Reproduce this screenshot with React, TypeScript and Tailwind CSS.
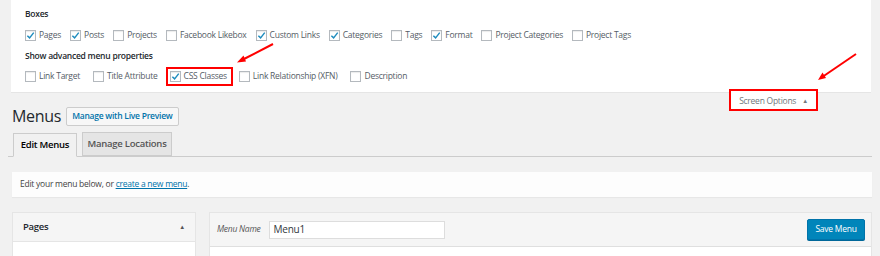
import React from 'react';

type Item = { label: string; checked?: boolean };

const boxes: Item[] = [
  { label: 'Pages', checked: true },
  { label: 'Posts', checked: true },
  { label: 'Projects' },
  { label: 'Facebook Likebox' },
  { label: 'Custom Links', checked: true },
  { label: 'Categories', checked: true },
  { label: 'Tags' },
  { label: 'Format', checked: true },
  { label: 'Project Categories' },
  { label: 'Project Tags' },
];

const Checkbox = ({ checked }: { checked?: boolean }) => (
  <span className="w-[11px] h-[11px] border border-[#b4b9be] bg-white shadow-[inset_0_1px_1px_rgba(0,0,0,0.08)] flex items-center justify-center shrink-0">
    {checked && (
      <svg width="9" height="9" viewBox="0 0 10 10">
        <path d="M1.5 5.2 L4 7.6 L8.6 1.8" fill="none" stroke="#1e8cbe" strokeWidth="1.6" />
      </svg>
    )}
  </span>
);

const Option = ({ label, checked }: Item) => (
  <label className="flex items-center gap-[3px] text-[#555d66]">
    <Checkbox checked={checked} />
    <span>{label}</span>
  </label>
);

export default function App() {
  return (
    <div className="relative w-[880px] h-[256px] overflow-hidden bg-[#f1f1f1] text-[8.5px] tracking-[-0.25px] text-[#444] font-['Open_Sans',sans-serif]">
      {/* Screen options panel */}
      <div className="ml-[11px] mr-[9px] h-[93px] bg-white border-b border-[#e5e5e5] pl-[14px] pt-[8px]">
        <div className="font-semibold text-[#23282d] leading-[12px]">Boxes</div>
        <div className="flex items-center gap-[9px] mt-[9px] h-[12px]">
          {boxes.map(b => (
            <Option key={b.label} {...b} />
          ))}
        </div>
        <div className="font-semibold text-[#23282d] leading-[12px] mt-[9px]">Show advanced menu properties</div>
        <div className="flex items-center gap-[13px] mt-[8px] h-[12px]">
          <Option label="Link Target" />
          <Option label="Title Attribute" />
          <div className="-ml-[5px] -mr-[7px] pl-[2px] pr-[4px] h-[19px] flex items-center border-2 border-[#ff0000]">
            <Option label="CSS Classes" checked />
          </div>
          <Option label="Link Relationship (XFN)" />
          <Option label="Description" />
        </div>
      </div>

      {/* Heading row + screen options tab */}
      <div className="flex items-start justify-between pl-[12px] pr-[62px]">
        <div className="flex items-center gap-[5px] pt-[14px]">
          <h1 className="text-[16px] leading-[19px] tracking-[-0.3px] text-[#23282d]">Menus</h1>
          <button className="h-[19px] px-[5px] bg-[#f7f7f7] border border-[#ccc] rounded-[2px] text-[#0073aa] font-semibold text-[8.5px]">
            Manage with Live Preview
          </button>
        </div>
        <div className="-mt-[4px] w-[89px] h-[22px] border-2 border-[#ff0000] flex items-center justify-center gap-[6px] pt-[3px] bg-white text-[#72777c]">
          <span>Screen Options</span>
          <span className="text-[6px]">▲</span>
        </div>
      </div>

      {/* Tabs */}
      <div className="mx-[8px] mt-[6px] pl-[5px] flex items-end gap-[5px] border-b border-[#ccc] h-[25px]">
        <div className="h-[24px] -mb-px w-[64px] flex items-center justify-center border border-[#ccc] border-b-[#f1f1f1] bg-[#f1f1f1] text-[#000] font-semibold text-[9.5px]">
          Edit Menus
        </div>
        <div className="h-[24px] w-[90px] flex items-center justify-center border border-[#ccc] bg-[#e5e5e5] text-[#555] font-semibold text-[9.5px]">
          Manage Locations
        </div>
      </div>

      {/* Notice */}
      <div className="ml-[12px] mr-[8px] mt-[15px] h-[25px] bg-[#fdfdfd] shadow-[0_1px_1px_rgba(0,0,0,0.04)] flex items-center pl-[8px] text-[#444]">
        Edit your menu below, or&nbsp;
        <span className="text-[#0073aa] underline">create a new menu</span>.
      </div>

      {/* Columns */}
      <div className="flex gap-[13px] ml-[12px] mr-[8px] mt-[15px]">
        <div className="w-[184px] shrink-0 border border-[#e5e5e5] bg-white">
          <div className="h-[29px] flex items-center justify-between px-[10px] bg-[#f5f5f5] border-b border-[#e5e5e5]">
            <span className="font-semibold text-[#23282d] text-[9.5px]">Pages</span>
            <span className="text-[6px] text-[#555]">▲</span>
          </div>
          <div className="h-[40px]" />
        </div>
        <div className="flex-1 border border-[#e5e5e5] bg-white">
          <div className="h-[34px] flex items-center justify-between pl-[7px] pr-[6px] bg-[#f5f5f5] border-b border-[#dfdfdf]">
            <div className="flex items-center gap-[8px]">
              <span className="italic text-[#555]">Menu Name</span>
              <div className="w-[176px] h-[18px] bg-white border border-[#ddd] flex items-center px-[4px] text-[#32373c] text-[10px]">
                Menu1
              </div>
            </div>
            <button className="h-[21px] w-[58px] bg-[#0085ba] border border-[#0073aa] rounded-[2px] text-white text-[8.5px] shadow-[0_1px_0_#006799]">
              Save Menu
            </button>
          </div>
          <div className="h-[40px]" />
        </div>
      </div>

      {/* Annotation arrows */}
      <svg className="absolute inset-0 pointer-events-none" width="880" height="256">
        <line x1="273" y1="44" x2="243" y2="59.5" stroke="#ff0000" strokeWidth="2" />
        <polygon points="237,62.5 243.5,55.5 246,61.5" fill="#ff0000" />
        <line x1="856" y1="54" x2="823" y2="76.5" stroke="#ff0000" strokeWidth="2" />
        <polygon points="818,80 822.5,72.5 826,78" fill="#ff0000" />
      </svg>
    </div>
  );
}
